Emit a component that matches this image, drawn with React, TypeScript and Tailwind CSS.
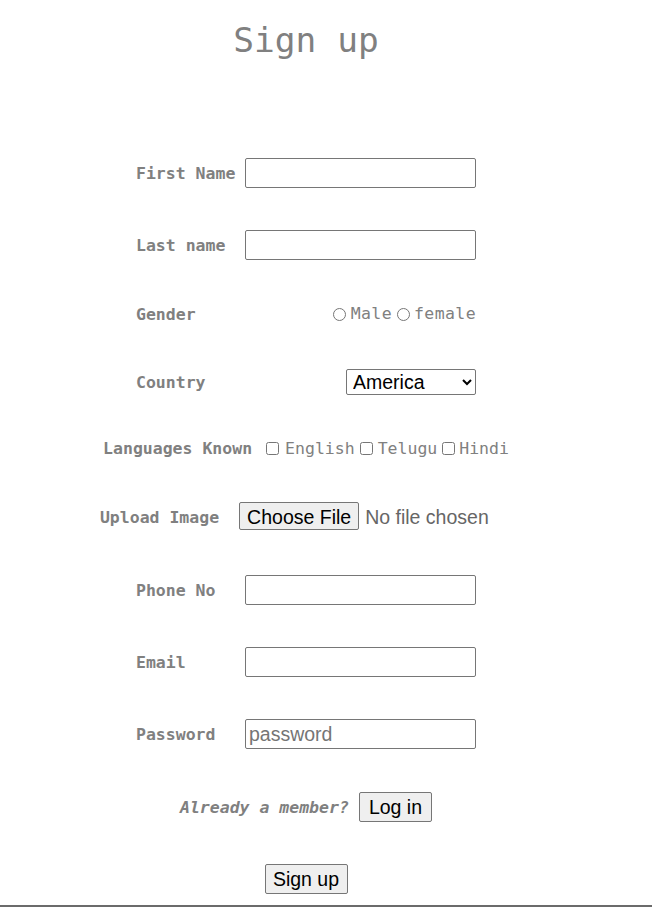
import React from 'react';

const mono = "font-['DejaVu_Sans_Mono',monospace]";
const sans = "font-['Liberation_Sans',Arial,sans-serif]";

function Label({ text }: { text: string }) {
  return <span className={`${mono} font-bold text-[16.5px] text-[#808080] whitespace-pre pt-[2px]`}>{text}</span>;
}

function TextRow({ label, type = 'text', placeholder, mt }: { label: string; type?: string; placeholder?: string; mt: string }) {
  return (
    <div className={`flex items-center h-[30px] ${mt}`}>
      <div className="w-[109px] flex">
        <Label text={label} />
      </div>
      <input
        type={type}
        placeholder={placeholder}
        className={`w-[231px] h-[30px] border border-[#767676] rounded-[2px] bg-white px-[3px] ${sans} text-[19.5px] text-black placeholder:text-[#757575] outline-none`}
      />
    </div>
  );
}

export default function App() {
  return (
    <div className="w-[652px] h-[907px] bg-white border-b-2 border-[#6b6b6b]">
      <div className="w-[612px] flex flex-col items-center">
        <h1 className={`${mono} font-normal text-[34.5px] leading-[40px] text-[#808080] mt-[20px]`}>Sign up</h1>

        <TextRow label="First Name" mt="mt-[98px]" />
        <TextRow label="Last name" mt="mt-[42px]" />

        {/* gender */}
        <div className="flex items-center h-[30px] mt-[39px]">
          <div className="w-[109px] flex">
            <Label text="Gender" />
          </div>
          <div className={`w-[231px] flex items-center justify-end pt-[1px] ${mono} text-[16.5px] text-[#808080]`}>
            <input type="radio" name="gender" className="m-0 w-[13px] h-[13px]" />
            <span className="ml-[5px] tracking-[0.4px]">Male</span>
            <input type="radio" name="gender" className="m-0 ml-[5px] w-[13px] h-[13px]" />
            <span className="ml-[4px] tracking-[0.4px]">female</span>
          </div>
        </div>

        {/* country */}
        <div className="flex items-center h-[30px] mt-[38px]">
          <div className="w-[109px] flex">
            <Label text="Country" />
          </div>
          <div className="w-[231px] flex justify-end">
            <select
              defaultValue="America"
              className={`w-[130px] h-[26px] border border-[#767676] rounded-[2px] bg-white pl-[2px] ${sans} text-[19.5px] text-black`}
            >
              <option>America</option>
              <option>India</option>
              <option>England</option>
            </select>
          </div>
        </div>

        {/* languages */}
        <div className={`flex items-center h-[30px] mt-[36px] ${mono} text-[16.5px] text-[#808080]`}>
          <Label text="Languages Known" />
          <input type="checkbox" className="m-0 ml-[14px] w-[13px] h-[13px]" />
          <span className="ml-[6px] pt-[2px]">English</span>
          <input type="checkbox" className="m-0 ml-[5px] w-[13px] h-[13px]" />
          <span className="ml-[5px] pt-[2px]">Telugu</span>
          <input type="checkbox" className="m-0 ml-[5px] w-[13px] h-[13px]" />
          <span className="ml-[4px] pt-[2px]">Hindi</span>
        </div>

        {/* upload */}
        <div className="flex items-center h-[30px] mt-[39px]">
          <Label text="Upload Image" />
          <input
            type="file"
            className={`ml-[20px] w-[273px] ${sans} text-[19.5px] text-[#666] file:h-[28px] file:px-[7px] file:mr-[6px] file:border file:border-[#767676] file:rounded-[2px] file:bg-[#efefef] file:text-black`}
          />
        </div>

        <TextRow label="Phone No" mt="mt-[43px]" />
        <TextRow label="Email" type="email" mt="mt-[42px]" />
        <TextRow label="Password" type="password" placeholder="password" mt="mt-[42px]" />

        <div className="flex items-center h-[30px] mt-[43px]">
          <span className={`${mono} font-bold italic text-[16.5px] text-[#808080] pt-[2px]`}>Already a member?</span>
          <button className={`ml-[10px] h-[30px] px-[9px] border border-[#767676] rounded-[2px] bg-[#efefef] ${sans} text-[19.5px] text-black`}>
            Log in
          </button>
        </div>

        <div className="flex items-center h-[30px] mt-[42px]">
          <button className={`w-[83px] h-[30px] border border-[#767676] rounded-[2px] bg-[#efefef] ${sans} text-[19.5px] text-black`}>
            Sign up
          </button>
        </div>
      </div>
    </div>
  );
}
